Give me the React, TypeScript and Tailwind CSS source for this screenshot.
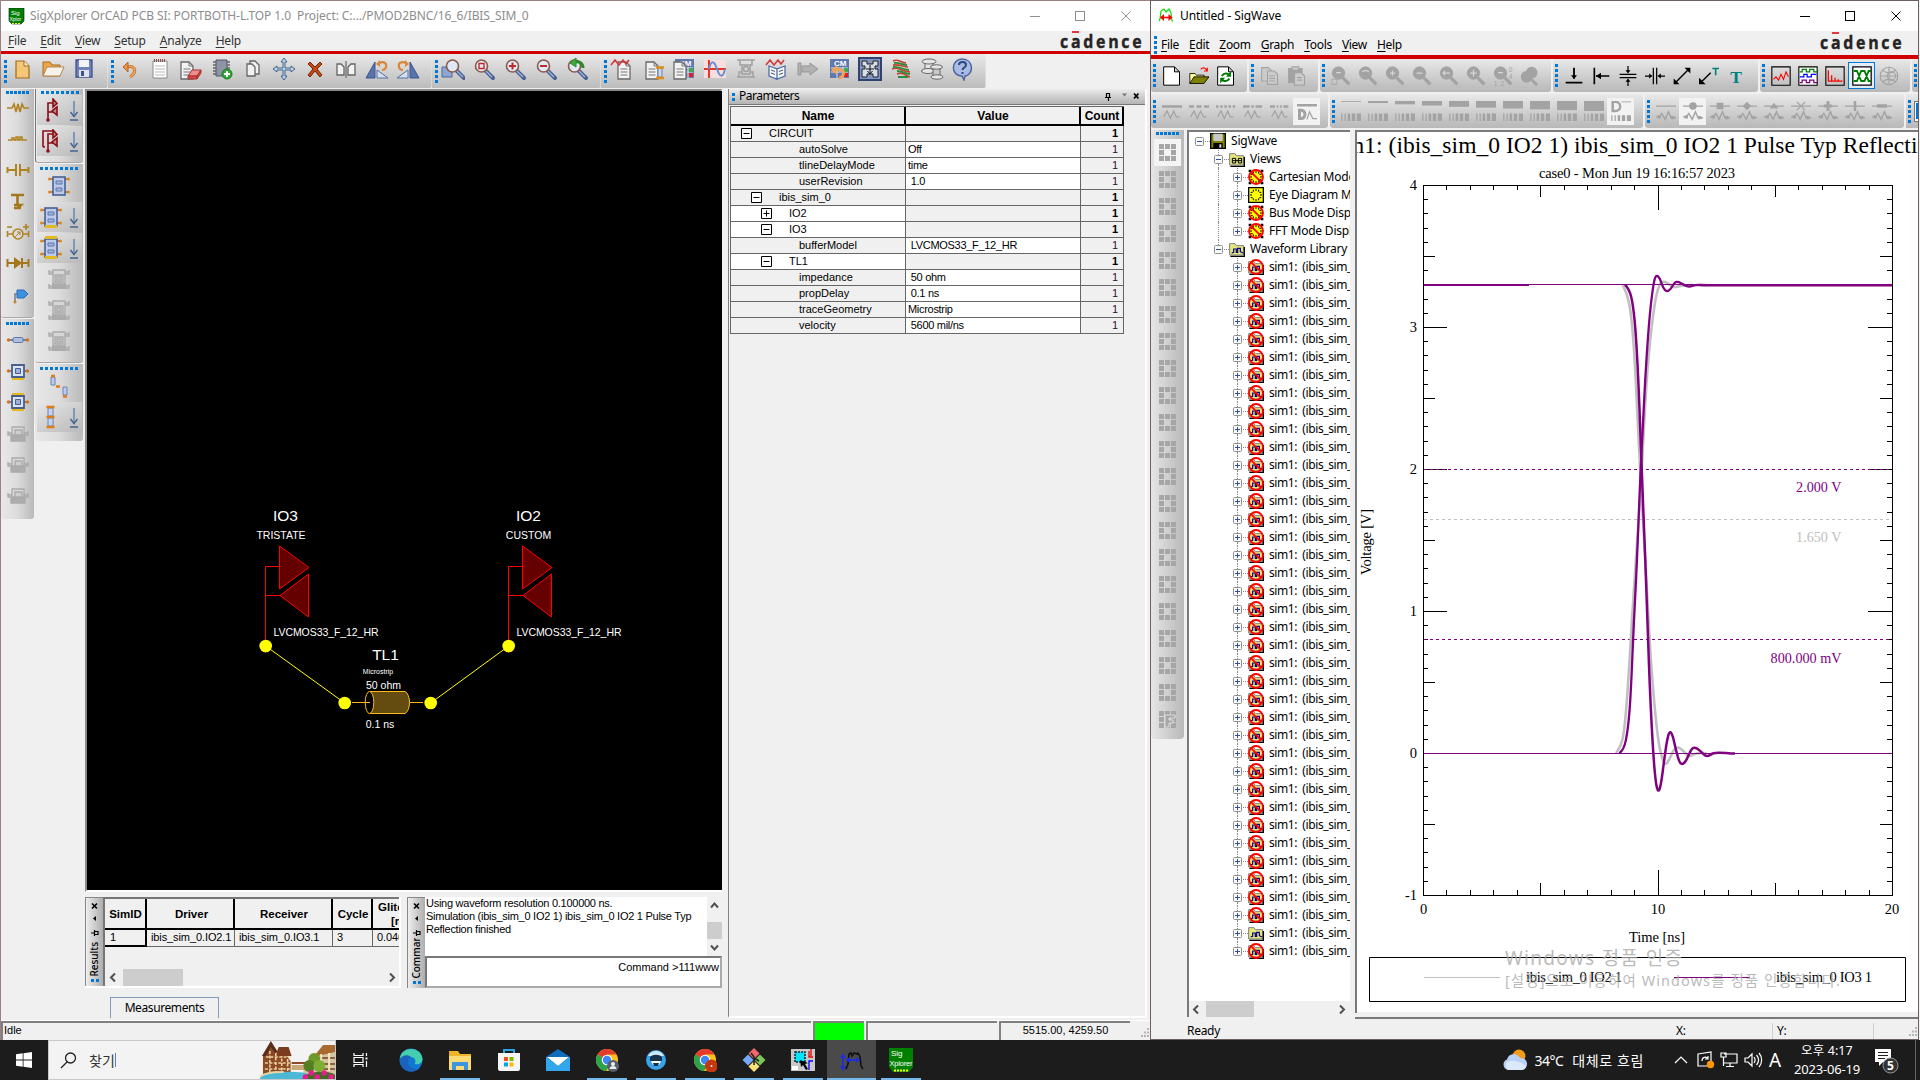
import React from "react";

type Kids = { children?: React.ReactNode };

/* ---------- small building blocks ---------- */

function Ic({ children, s = 24 }: Kids & { s?: number }) {
  return (
    <svg width={s} height={s} viewBox="0 0 24 24" fill="none" className="shrink-0">
      {children}
    </svg>
  );
}

function GripV() {
  return (
    <div className="flex w-[3px] shrink-0 flex-col gap-[2px]">
      {[0, 1, 2, 3, 4].map((i) => (
        <i key={i} className="h-[3px] w-[3px] bg-[#0078d7]" />
      ))}
    </div>
  );
}

function GripH({ n, wide }: { n: number; wide?: boolean }) {
  return (
    <div className={wide ? "flex justify-center gap-[2px]" : "flex justify-center gap-[1px]"}>
      {Array.from({ length: n }, (_, i) => (
        <i key={i} className="h-[3px] w-[3px] bg-[#0078d7]" />
      ))}
    </div>
  );
}

function Cadence() {
  return (
    <svg width="84" height="20" viewBox="0 0 84 20" className="overflow-visible">
      <g transform="scale(0.86 1)">
        <text x="0" y="16.500" textLength="95" lengthAdjust="spacing" fontFamily="Open Sans, sans-serif" fontWeight="700" fontSize="18.500" fill="#262324" stroke="#262324" strokeWidth=".4">
          cadence
        </text>
      </g>
      <rect x="12" y="0" width="7" height="2" fill="#e0383e" />
    </svg>
  );
}

function WinButtons({ color }: { color: string }) {
  return (
    <svg width="120" height="14" viewBox="0 0 120 14" fill="none" stroke={color} shapeRendering="crispEdges">
      <path d="M4 7.500h10M49.500 2.500h9v9h-9z" />
      <path d="M95.500 2.500l9 9M104.500 2.500l-9 9" shapeRendering="auto" />
    </svg>
  );
}

function Menu({ items, className }: { items: string[]; className: string }) {
  return (
    <div className={className}>
      {items.map((m) => (
        <span key={m}>
          <span className="underline underline-offset-2">{m[0]}</span>
          {m.slice(1)}
        </span>
      ))}
    </div>
  );
}

/* ---------- SigXplorer toolbar icons ---------- */

const Lens = ({ children }: Kids) => (
  <>
    <path d="M14 14l7 7" stroke="#4a5f96" strokeWidth="4" strokeLinecap="round" />
    <path d="M14 14l6 6" stroke="#9cb0d8" strokeWidth="1.500" />
    <circle cx="9.500" cy="9" r="6" fill="#dfe9f7" stroke="#8a5a48" strokeWidth="1.600" />
    {children}
  </>
);
const Page = ({ x = 5 }: { x?: number }) => (
  <g transform={`translate(${x} 3)`}>
    <path d="M1 2h8l4 4v13H1z" fill="#f2f2f2" stroke="#6a6a6a" strokeWidth="1.300" />
    <path d="M9 2v4h4M3.500 9h7M3.500 12h7M3.500 15h7" stroke="#777" />
  </g>
);
const CM = () => (
  <>
    <path d="M3 2h19v19H3z" fill="#5f78ae" />
    <text x="7" y="9" fontSize="8" fontWeight="700" fill="#fff" fontFamily="Liberation Sans, sans-serif">CM</text>
    <path d="M4 11h17M4 15h17M10 10v11M16 10v11" stroke="#dbe2f0" />
    <path d="M17 11h4v4h-4z" fill="#3fae49" />
    <path d="M17 16h4v4h-4z" fill="#e02020" />
  </>
);

const fileIcons = [
  <><path d="M6 4h8l5 5v12H6z" fill="#f3c777" stroke="#a36a1c" strokeWidth="1.200" /><path d="M14 4v5h5" fill="#fff1cf" stroke="#a36a1c" /></>,
  <><path d="M2 19V5h7l2 3h8v11z" fill="#eda64a" stroke="#a96a1f" /><path d="M2 19l4-9h17l-4 9z" fill="#f7f3ea" stroke="#b58750" /></>,
  <><path d="M4 3h16v17H4z" fill="#6f82bb" stroke="#3f5190" strokeWidth="1.300" /><path d="M7 3h10v7H7z" fill="#f2f4fa" /><path d="M7 13h10v7H7z" fill="#dfe3ee" /><path d="M9 14h3v5H9z" fill="#3f5190" /></>,
];
const editIcons = [
  <><path d="M10 10c6-2 9 2 7 6-1 2-2 3-4 4" stroke="#b5641f" strokeWidth="3" /><path d="M10 10c6-2 9 2 7 6-1 2-2 3-4 4" stroke="#f0a35a" strokeWidth="1.800" /><path d="M6 10l5-5v10z" fill="#e8944a" stroke="#b5641f" /></>,
  <><path d="M5 4h14v17H5z" fill="#fff" stroke="#8a8a8a" /><path d="M7 9h10M7 12h10M7 15h10M7 18h10" stroke="#b9b9b9" /><path d="M6 3.500h12" stroke="#8c5050" strokeWidth="3" strokeDasharray="1 1" /></>,
  <><Page x={1} /><path d="M9 19l4-6h9l-4 6z" fill="#ef8d8d" stroke="#a63434" /><path d="M9 19h9v3H9zM18 19l4-6v3l-4 6z" fill="#d64545" stroke="#a63434" /></>,
  <><path d="M6 3h11v16H6z" fill="#8c94a5" stroke="#4f5563" /><path d="M3 5h3M3 8h3M3 11h3M3 14h3M3 17h3M17 5h3M17 8h3M17 11h3" stroke="#666" strokeWidth="1.500" /><circle cx="17" cy="17" r="5" fill="#2fa836" stroke="#1b7a22" /><path d="M17 14v6M14 17h6" stroke="#fff" strokeWidth="2" /></>,
  <><path d="M9 4h5l4 4v9H9z" fill="#f1f1f1" stroke="#666" strokeWidth="1.300" /><path d="M6 7h5l3 3v9H6z" fill="#f1f1f1" stroke="#666" strokeWidth="1.300" /></>,
  <path d="M12 1l3 4h-2v6h6V9l4 3-4 3v-2h-6v6h2l-3 4-3-4h2v-6H5v2l-4-3 4-3v2h6V5H9z" fill="#bed3e6" stroke="#43668a" />,
  <path d="M7 5l5 5 5-5 2 2-5 5 5 6-2 2-5-6-5 6-2-2 5-6-5-5z" fill="#c24a18" stroke="#762506" />,
  <><path d="M3 7h4l3 3v8H3zM21 7h-4l-3 3v8h7z" fill="#f3f3f3" stroke="#666" strokeWidth="1.300" /><path d="M12 4v17" stroke="#555" /></>,
  <><path d="M10 5v16H1z" fill="#5874ac" stroke="#3e5688" /><path d="M12 21v-8l11 8z" fill="#d7dfef" stroke="#55709f" /><path d="M14 6c5-2 8 0 7 4-.5 2-2 3-4 3" stroke="#dd8639" strokeWidth="2.200" /><path d="M11 7l4-4v7z" fill="#dd8639" /></>,
  <><path d="M14 5v16h9z" fill="#5874ac" stroke="#3e5688" /><path d="M12 21v-8L1 21z" fill="#d7dfef" stroke="#55709f" /><path d="M10 6C5 4 2 6 3 10c.5 2 2 3 4 3" stroke="#dd8639" strokeWidth="2.200" /><path d="M13 7L9 3v7z" fill="#dd8639" /></>,
];
const zoomIcons = [
  <><path d="M1 10h10v10H1z" fill="#8ea4d2" stroke="#51689c" /><g transform="translate(2 0)"><Lens /></g></>,
  <Lens><path d="M7 6.500h5v5H7z" stroke="#c22a2a" strokeWidth="1.400" /></Lens>,
  <Lens><path d="M9.500 5.500v7M6 9h7" stroke="#c22a2a" strokeWidth="2" /></Lens>,
  <Lens><path d="M6 9h7" stroke="#c22a2a" strokeWidth="2" /></Lens>,
  <Lens><path d="M18 11c0-5-4-7-8-6" stroke="#2c8a2c" strokeWidth="3" /><path d="M11 1L5 6l6 4z" fill="#3fae3f" stroke="#2c8a2c" /></Lens>,
];
const wave = <path d="M1 8l4-5 4 5 4-5 3 4 3-4" stroke="#d13b3b" strokeWidth="1.600" />;
const toolIcons = [
  <><Page x={7} />{wave}</>,
  <><Page x={4} /><path d="M17 11h4v9h-4z" fill="#c8d6ef" stroke="#6c82b3" /><path d="M15 10.500h8M15 21h8" stroke="#dd8d18" strokeWidth="2.500" /></>,
  <><CM /><Page x={1} /></>,
  <><path d="M1 3h22v18H1z" fill="#f8dede" /><path d="M6 3v18M1 12h22" stroke="#e23a2a" strokeWidth="2" /><path d="M6 12c2-9 5-9 8 0s6 9 8 0" stroke="#6b8fd0" strokeWidth="2" /></>,
  <g stroke="#a0a0a0" strokeWidth="1.500"><path d="M3 3h18M3 20h18M6 3v5h2M18 3v5h-2M8 8h8v9H8zM5 20v-5h3M19 20v-5h-3" /><circle cx="12" cy="12" r="2.500" /></g>,
  <>{wave}<path d="M4 9l8 3v10l-8-3zM20 9l-8 3v10l8-3z" fill="#f4f7fd" stroke="#4f6da8" strokeWidth="1.300" /><path d="M6 13l4 1.500M6 16l4 1.500M18 13l-4 1.500M18 16l-4 1.500" stroke="#555" /></>,
  <path d="M2 6h3v12H2zM6 9h8V6l8 6-8 6v-3H6z" fill="#b1b1b1" stroke="#999" />,
  <><CM /><path d="M9 13c6-2 9 2 7 5-1 2-2 3-4 3" stroke="#f0a35a" strokeWidth="3" /><path d="M4 13l6-5v10z" fill="#f0a35a" /></>,
  <><path d="M1 1h22v22H1z" fill="#8396c1" stroke="#30426f" strokeWidth="2" /><path d="M4 4h5v3h6V4h5v5h-3v3h3v8h-5v-3H9v3H4v-8h3V9H4z" fill="#d6ddea" stroke="#222" /><path d="M8 12h8M12 8v8M9.500 14l2.500 3 2.500-3" stroke="#111" /></>,
  <><path d="M4 4c5-3 8 2 13 2M4 8c6-1 11 2 15 2M3 12c6-3 10 3 18 3M8 17c6-3 9 2 13 3" stroke="#c8402d" strokeWidth="1.600" /><path d="M5 6c5-1 8 2 13 2M4 10c6-1 11 3 16 3M8 14c6 0 8 3 13 3M9 20h10" stroke="#2d8d3a" strokeWidth="1.800" /></>,
  <g stroke="#666" fill="#e4e4e4"><path d="M5 5v8h8V5z" /><ellipse cx="9" cy="4.500" rx="7" ry="2.500" /><ellipse cx="8" cy="14" rx="6.500" ry="2.500" /><path d="M13 11v8h7v-8z" fill="#c9c9c9" /><ellipse cx="16.500" cy="10" rx="6" ry="2.200" /><ellipse cx="17" cy="20" rx="6" ry="2.200" /></g>,
  <><path d="M11 2c12 0 12 16 3 17l-1 4-2-4C-1 19 0 2 11 2z" fill="#a9bbe2" stroke="#4c669f" strokeWidth="1.500" /><path d="M8 8c0-4 7-4 7 0 0 2.500-3.500 2.500-3.500 5M11.500 15v2" stroke="#2c4882" strokeWidth="2" /></>,
];

function LeftToolbar() {
  const groups = [
    { w: "w-[107px]", icons: fileIcons },
    { w: "w-[324px]", icons: editIcons },
    { w: "w-[169px]", icons: zoomIcons },
    { w: "w-[385px]", icons: toolIcons },
  ];
  return (
    <div className="flex h-[34px] shrink-0">
      {groups.map((g, i) => (
        <div key={i} className={`${g.w} flex items-center rounded-r-[2px] border-r border-dotted border-[#e9e9e9] bg-gradient-to-b from-[#e9e9e9] to-[#bcbcbc] pl-[3px]`}>
          <GripV />
          <div className="ml-[3px] flex gap-[7px] pb-[4px]">
            {g.icons.map((ic, k) => (
              <Ic key={k}>{ic}</Ic>
            ))}
          </div>
        </div>
      ))}
    </div>
  );
}

/* ---------- side palettes ---------- */

const gold = "#b08322";
const partIcons = [
  <path d="M1 12h5l2-4 2 8 2-8 2 8 2-8 2 4h5" stroke={gold} strokeWidth="1.600" />,
  <path d="M2 13h4v-2h2v2h2v-3h2v3h2v-3h2v3h5" stroke={gold} strokeWidth="1.600" />,
  <path d="M1 12h9M14 12h9M10 6v12M14 6v12M1.500 9v6M22.500 9v6" stroke={gold} strokeWidth="2" />,
  <path d="M5 6h13M11.500 6v9M8 16h7l-3 3h3M8 19h4" stroke="#a5771c" strokeWidth="2.600" />,
  <><path d="M1 14h6M17 14h6M1.500 11v6M22.500 11v6M1 7h5M17 7h6M20 4v6" stroke={gold} strokeWidth="1.600" /><circle cx="12" cy="14" r="5" stroke={gold} strokeWidth="1.500" /><path d="M9 17l5-5M11 12h3v3" stroke={gold} /></>,
  <><path d="M1 12h22M1.500 8v8M22.500 8v8M16 7v10" stroke="#a5771c" strokeWidth="2" /><path d="M8 6l8 6-8 6z" fill="#a5771c" /></>,
  <><path d="M9 21v-9h4" stroke="#6c7d90" strokeWidth="1.500" /><path d="M11 8h7l4 4-4 4h-7z" fill="#3f8fe0" stroke="#2d6db4" /><circle cx="9" cy="20" r="1.500" fill="#c78628" /></>,
];
const Sq = ({ top, bot }: { top?: boolean; bot?: boolean }) => (
  <>
    <path d="M1 12h22" stroke="#52688f" strokeWidth="1.500" />
    <path d="M6 6h12v12H6z" fill="#dbe4f5" stroke="#4a5f8c" strokeWidth="1.800" />
    <path d="M9.500 9.500h5v5h-5z" fill="#9db0d8" stroke="#4a5f8c" />
    {top && <path d="M6 3h12v2H6z" fill="#e5b91e" />}
    {bot && <path d="M6 19h12v2H6z" fill="#e5b91e" />}
    <circle cx="2.500" cy="12" r="1.700" fill="#d9711a" /><circle cx="21.500" cy="12" r="1.700" fill="#d9711a" />
  </>
);
const SqGray = () => (
  <g stroke="#aaa" strokeWidth="1.300">
    <path d="M2 10v4h4M22 10v4h-4M2 12h4M18 12h4" />
    <path d="M6 6h12v8H6z" fill="#dadada" />
    <path d="M9 9h7v5H9z" fill="#cfcfcf" />
    <path d="M5 15h14v5H5z" fill="#adadad" />
  </g>
);
const lineIcons = [
  <><path d="M2 12h20" stroke="#52688f" strokeWidth="1.500" /><rect x="7" y="9.500" width="10" height="5" rx="1.500" fill="#aebfe2" stroke="#5e76a8" /><circle cx="2.500" cy="12" r="1.700" fill="#d9711a" /><circle cx="21.500" cy="12" r="1.700" fill="#d9711a" /></>,
  <Sq bot />,
  <Sq top bot />,
  <SqGray />,
  <SqGray />,
  <SqGray />,
];
const Chip = ({ top, bot }: { top?: boolean; bot?: boolean }) => (
  <>
    <path d="M2 5h20M2 18h20" stroke="#9a6a4a" strokeWidth="1.500" />
    <path d="M6 3h12v18H6z" fill="#bccaeb" stroke="#415a8c" strokeWidth="1.500" />
    <path d="M9 7h6v3H9zM9 14h6v3H9z" fill="#a3b5de" stroke="#5e76a8" />
    {[5, 18].map((y) => <g key={y} fill="#e0861c"><circle cx="2.500" cy={y} r="1.500" /><circle cx="21.500" cy={y} r="1.500" /></g>)}
    {top && <path d="M6 0h12v3H6z" fill="#e5b91e" />}
    {bot && <path d="M6 20h12v3H6z" fill="#e5b91e" />}
  </>
);
const ChipGray = () => (
  <g stroke="#aaa" strokeWidth="1.300">
    <path d="M2 3v4h4M22 3v4h-4M2 17v4h4M22 17v4h-4M2 5h4M18 5h4M2 19h4M18 19h4" />
    <path d="M6 3h12v18H6z" fill="#d6d6d6" />
    <path d="M8 8h8v7H8zM10 10h4v3h-4z" fill="#cdcdcd" />
    <path d="M6 17h12v4H6z" fill="#adadad" />
  </g>
);
const Buf = ({ dbl }: { dbl?: boolean }) => (
  <g stroke="#8c0d14" strokeWidth="1.600">
    <path d="M9 22V5h5M9 14h5" />
    <path d="M14 1v8l4-3.500zM18 9v8l-5-4z" fill="#b98b8b" />
    {dbl && <path d="M4 18V2h10M4 18h2" />}
    <circle cx="9" cy="22" r="1" fill="#8c0d14" />
  </g>
);
const Down = () => (
  <svg width="10" height="24" viewBox="0 0 10 24" fill="none" stroke="#44648f" className="shrink-0">
    <path d="M5 3v14" stroke="#7c98bb" strokeWidth="2" />
    <path d="M1.500 14L5 18.500 8.500 14M1 22h8" strokeWidth="1.400" />
  </svg>
);
const Drop = ({ children }: Kids) => (
  <div className="mb-px flex h-[30px] w-[45px] items-center gap-[6px] bg-gradient-to-br from-[#e8e8e8] to-[#b9b9b9] pl-[2px]">
    <Ic>{children}</Ic>
    <Down />
  </div>
);

function Palettes() {
  const bg = "bg-gradient-to-r from-[#e8e8e8] via-[#dcdcdc] to-[#b9b9b9] rounded-b-[3px]";
  return (
    <div className="flex w-[84px] shrink-0 gap-px">
      <div className="flex w-[33px] flex-col">
        <div className={`${bg} flex h-[229px] flex-col items-center border-b border-[#aaa] pt-[2px]`}>
          <GripH n={6} />
          <div className="mt-[2px] flex flex-col gap-[7px]">
            {partIcons.map((p, i) => <Ic key={i}>{p}</Ic>)}
          </div>
        </div>
        <div className={`${bg} mt-px flex h-[200px] flex-col items-center pt-[3px]`}>
          <GripH n={6} />
          <div className="mt-[3px] flex flex-col gap-[7px]">
            {lineIcons.map((p, i) => <Ic key={i}>{p}</Ic>)}
          </div>
        </div>
      </div>
      <div className="flex w-[48px] flex-col">
        <div className={`${bg} flex h-[74px] flex-col items-center border-b border-l border-[#aaa] border-l-[#777] pt-[2px]`}>
          <GripH n={8} wide />
          <div className="mt-[1px]">
            <Drop><Buf /></Drop>
            <Drop><Buf dbl /></Drop>
          </div>
        </div>
        <div className={`${bg} mt-px flex h-[199px] flex-col items-center border-b border-[#aaa] pt-[3px]`}>
          <GripH n={8} wide />
          <div className="mt-[4px] mb-[4px]"><Ic><Chip /></Ic></div>
          <Drop><Chip bot /></Drop>
          <Drop><Chip top bot /></Drop>
          <div className="mt-[3px] flex flex-col gap-[7px]">
            {[0, 1, 2].map((i) => <Ic key={i}><ChipGray /></Ic>)}
          </div>
        </div>
        <div className={`${bg} mt-px flex h-[77px] flex-col items-center pt-[3px]`}>
          <GripH n={8} wide />
          <div className="mt-[4px] mb-[4px]">
            <Ic><path d="M4 3h4v8H4zM16 13h4v8h-4z" fill="#bccaeb" stroke="#6d84b5" /><path d="M4 2h4M9 12.500h4M16 22.500h4" stroke="#dd7d18" strokeWidth="2.400" /></Ic>
          </div>
          <Drop><path d="M9 3h5v8H9zM9 13h5v8H9z" fill="#c5d2ee" stroke="#6d84b5" /><path d="M7.500 2h8M7.500 12h8M7.500 22h8" stroke="#dd7d18" strokeWidth="2.400" /></Drop>
        </div>
      </div>
    </div>
  );
}

/* ---------- circuit canvas ---------- */

function Buffer({ dx, name, kind, kindX }: { dx: number; name: string; kind: string; kindX: number }) {
  return (
    <g transform={`translate(${dx} 0)`}>
      <text x="285.500" y="521" textAnchor="middle" fontSize="15.500">{name}</text>
      <text x={kindX} y="539" textAnchor="middle" fontSize="10.500">{kind}</text>
      <path d="M265.500 653v-86.500h14M265.500 595.500h15" fill="none" stroke="#f00" />
      <path d="M279.500 546v43l29.500-21.500zM308.500 574v43L280 595.500z" fill="#640000" stroke="#f00" />
      <text x="273.500" y="635.500" fontSize="10.500" textLength="105">LVCMOS33_F_12_HR</text>
      <circle cx="265.700" cy="646" r="6.300" fill="#ff0" stroke="none" />
    </g>
  );
}

function Circuit() {
  return (
    <svg width="635" height="799" viewBox="87 91 635 799" className="block bg-black" fontFamily="Liberation Sans, Arial, sans-serif" fill="#fff">
      <path d="M265.700 646L344.700 703M430.700 703L508.700 646" stroke="#ff0" fill="none" />
      <Buffer dx={0} name="IO3" kind="TRISTATE" kindX={281} />
      <Buffer dx={243} name="IO2" kind="CUSTOM" kindX={285.5} />
      <text x="385.500" y="660" textAnchor="middle" fontSize="15.500">TL1</text>
      <text x="378" y="674" textAnchor="middle" fontSize="7">Microstrip</text>
      <text x="383.500" y="689" textAnchor="middle" fontSize="10.500">50 ohm</text>
      <text x="380" y="728" textAnchor="middle" fontSize="10.500">0.1 ns</text>
      <path d="M370 691.500h35c6 3 6 19 0 22h-35z" fill="#644b10" stroke="#ffb91e" />
      <ellipse cx="369.500" cy="702.500" rx="4.300" ry="11" fill="#000" stroke="#ffb91e" />
      <path d="M352 702.500h18M410 702.500h13" stroke="#ffb91e" />
      <circle cx="344.700" cy="703" r="6.300" fill="#ff0" />
      <circle cx="430.700" cy="703" r="6.300" fill="#ff0" />
    </svg>
  );
}

/* ---------- parameters panel ---------- */

type Param = { d: 0 | 1 | 2 | 3; n: string; v?: string; box?: "+" | "-"; w?: boolean };
const params: Param[] = [
  { d: 0, n: "CIRCUIT", box: "-" },
  { d: 3, n: "autoSolve", v: "Off" },
  { d: 3, n: "tlineDelayMode", v: "time" },
  { d: 3, n: "userRevision", v: " 1.0" },
  { d: 1, n: "ibis_sim_0", box: "-" },
  { d: 2, n: "IO2", box: "+", w: true },
  { d: 2, n: "IO3", box: "-", w: true },
  { d: 3, n: "bufferModel", v: " LVCMOS33_F_12_HR" },
  { d: 2, n: "TL1", box: "-", w: true },
  { d: 3, n: "impedance", v: " 50 ohm" },
  { d: 3, n: "propDelay", v: " 0.1 ns" },
  { d: 3, n: "traceGeometry", v: "Microstrip" },
  { d: 3, n: "velocity", v: " 5600 mil/ns" },
];
const indent = ["pl-[10px]", "pl-[20px]", "pl-[30px]", "pl-[68px]"];

function Parameters() {
  const th = "flex h-[19px] items-center justify-center border-r-2 border-b-2 border-black pl-px font-bold text-[12px] leading-[14px]";
  return (
    <div className="flex h-[929px] w-[419px] flex-col border-r-2 border-b-2 border-l border-white border-l-[#808080]">
      <div className="flex h-[16px] shrink-0 items-center border-b border-[#777] bg-gradient-to-b from-[#ececec] to-[#b4b4b4] pl-[3px] font-['Noto_Sans'] text-[12px] leading-[14px]">
        <span className="flex flex-col gap-[2px]"><i className="h-[3px] w-[3px] bg-[#0078d7]" /><i className="h-[3px] w-[3px] bg-[#0078d7]" /></span>
        <span className="mt-[-2px] ml-[4px] tracking-[-0.5px]">Parameters</span>
        <svg className="mr-[6px] ml-auto" width="36" height="11" viewBox="0 0 36 11" fill="none" stroke="#000">
          <path d="M2 6.500h6M3.500 6V2.500h3V6M5.500 6v4" strokeWidth="1.200" />
          <path d="M19 2.500h5l-2.500 3z" fill="#777" stroke="none" />
          <path d="M31 2.500l4.500 5M35.500 2.500L31 7.500" strokeWidth="1.800" />
        </svg>
      </div>
      <div className="mt-px ml-px flex w-[394px] flex-col border-t border-l border-[#666] text-[11px]">
        <div className="grid h-[19px] grid-cols-[175px_175px_43px]">
          <div className={th}>Name</div>
          <div className={th}>Value</div>
          <div className={th}>Count</div>
        </div>
        {params.map((p, i) => (
          <div key={i} className="grid h-[16px] grid-cols-[175px_175px_43px] leading-[15px]">
            <div className={`${indent[p.d]} ${p.w ? "bg-white" : ""} flex items-center border-r border-b border-[#666]`}>
              {p.box && (
                <svg width="11" height="11" viewBox="0 0 11 11" className="mr-[17px]" stroke="#000" fill="#fff">
                  <path d="M.5.5h10v10H.5zM2.500 5.500h6" />
                  {p.box === "+" && <path d="M5.500 2.500v6" />}
                </svg>
              )}
              {p.n}
            </div>
            <div className={`${p.v ? "bg-white" : ""} border-r border-b border-[#666] pl-[2px] tracking-[-0.3px] whitespace-pre`}>{p.v}</div>
            <div className={`${p.v ? "text-[#301030]" : "font-bold"} border-r border-b border-[#666] pr-[5px] text-right`}>1</div>
          </div>
        ))}
      </div>
    </div>
  );
}

/* ---------- lower panels ---------- */

function Strip({ label }: { label: string }) {
  return (
    <div className="flex w-[18px] shrink-0 flex-col items-center overflow-hidden border-t border-l border-[#888] bg-gradient-to-r from-[#eee] to-[#aeaeae] pt-[4px] pb-[4px]">
      <svg width="11" height="36" viewBox="0 0 11 36" fill="none" stroke="#000" className="shrink-0">
        <path d="M3 1.500l5 5M8 1.500l-5 5" strokeWidth="1.600" />
        <path d="M7 14v5l-3-2.500z" fill="#000" stroke="none" />
        <path d="M5.500 28v6M5.500 29.500h3.500v3h-3.500M2 31h3" strokeWidth="1.200" />
      </svg>
      <div className="flex min-h-0 flex-1 items-end overflow-hidden font-['Noto_Sans'] text-[10px] leading-[13px] font-medium">
        <span className="rotate-180 whitespace-nowrap [writing-mode:vertical-rl]">{label}</span>
      </div>
      <span className="mt-[2px] flex gap-[2px]"><i className="h-[3px] w-[3px] bg-[#0078d7]" /><i className="h-[3px] w-[3px] bg-[#0078d7]" /></span>
    </div>
  );
}

const Chevron = ({ d }: { d: string }) => (
  <svg width="11" height="11" viewBox="0 0 11 11" fill="none" stroke="#505050" strokeWidth="2"><path d={d} /></svg>
);

function Lower() {
  const th = "flex items-center justify-center border-r-2 border-b-2 border-black font-bold";
  const td = "border-r border-b border-[#666] pl-[4px] whitespace-nowrap";
  return (
    <div className="mt-[5px] flex h-[91px] shrink-0">
      <div className="flex w-[316px] border-r-2 border-b-2 border-white">
        <Strip label="Results" />
        <div className="flex min-w-0 flex-1 flex-col overflow-hidden border-t-2 border-l-2 border-[#777] text-[11px]">
          <div className="grid h-[31px] shrink-0 grid-cols-[42px_88px_98px_40px_60px] text-[11.500px] leading-[14px]">
            <div className={`${th} pl-px`}>SimID</div>
            <div className={`${th} pl-[3px]`}>Driver</div>
            <div className={`${th} pl-[2px]`}>Receiver</div>
            <div className={`${th} pl-[2px]`}>Cycle</div>
            <div className="border-b-2 border-black pt-px pl-[5px] font-bold">Glitch<br /><span className="pl-[13px]">[mV]</span></div>
          </div>
          <div className="grid h-[16px] shrink-0 grid-cols-[42px_88px_98px_40px_60px] leading-[15px] tracking-[-0.1px]">
            <div className="border-r-2 border-b-2 border-black pl-[5px] leading-[15px]">1</div>
            <div className={td}>ibis_sim_0.IO2.1</div>
            <div className={td}>ibis_sim_0.IO3.1</div>
            <div className={td}>3</div>
            <div className={td}>0.0461</div>
          </div>
          <div className="mt-auto flex h-[17px] items-center bg-[#f0f0f0] pr-[2px] pl-[3px]">
            <Chevron d="M7 1.500L3 5.500l4 4" />
            <div className="ml-[4px] h-full w-[60px] bg-[#cdcdcd]" />
            <span className="ml-auto"><Chevron d="M4 1.500l4 4-4 4" /></span>
          </div>
        </div>
      </div>
      <div className="ml-[6px] flex w-[315px]">
        <Strip label="Command" />
        <div className="flex min-w-0 flex-1 flex-col">
          <div className="flex h-[59px] bg-white">
            <div className="min-w-0 flex-1 pl-px text-[11px] leading-[13px] tracking-[-0.26px] whitespace-nowrap">
              Using waveform resolution 0.100000 ns.<br />
              Simulation (ibis_sim_0 IO2 1) ibis_sim_0 IO2 1 Pulse Typ<br />
              Reflection finished
            </div>
            <div className="flex w-[15px] shrink-0 flex-col items-center bg-[#f0f0f0] py-[3px]">
              <Chevron d="M2 7.500l3.500-4 3.500 4" />
              <div className="mt-[11px] h-[17px] w-full bg-[#cdcdcd]" />
              <span className="mt-auto"><Chevron d="M2 3.500l3.500 4 3.500-4" /></span>
            </div>
          </div>
          <div className="flex-1 border-2 border-[#777] border-r-[#aaa] border-b-[#aaa] bg-white pt-[2px] pr-px text-right text-[11px] leading-[14px]">
            Command &gt;111www
          </div>
        </div>
      </div>
    </div>
  );
}

function SigXplorer() {
  const cell = "border-t-2 border-l-2 border-[#808080]";
  return (
    <div className="flex h-[1040px] w-[1150px] shrink-0 flex-col border-t border-l border-[#9a8080] bg-[#f0f0f0]">
      <div className="flex h-[30px] shrink-0 items-center bg-white pl-[7px] font-['Noto_Sans'] text-[12px] text-[#8d8d8d]">
        <svg width="17" height="17" viewBox="0 0 17 17">
          <path d="M1 0h15v13l-3 3H4l-3-3z" fill="#008000" stroke="#111" strokeWidth=".6" />
          <path d="M4 15.500h9" stroke="#ff0" strokeDasharray="2 1" />
          <text x="3" y="7" fontSize="6" fill="#fff" fontFamily="Liberation Sans, sans-serif">Sig</text>
          <text x="1.500" y="12.500" fontSize="5" fill="#fff" fontFamily="Liberation Sans, sans-serif">Xplor</text>
        </svg>
        <span className="ml-[5px] tracking-[-0.08px] whitespace-pre">SigXplorer OrCAD PCB SI: PORTBOTH-L.TOP 1.0  Project: C:.../PMOD2BNC/16_6/IBIS_SIM_0</span>
        <span className="mr-[4px] ml-auto"><WinButtons color="#909090" /></span>
      </div>
      <div className="flex h-[20px] shrink-0 items-center justify-between pr-[6px]">
        <Menu items={["File", "Edit", "View", "Setup", "Analyze", "Help"]} className="flex gap-[14px] pl-[7px] font-['Noto_Sans'] text-[12px] tracking-[-0.22px] text-[#333]" />
        <Cadence />
      </div>
      <div className="h-[3px] shrink-0 bg-[#d00000]" />
      <LeftToolbar />
      <div className="mt-px flex h-[929px] shrink-0">
        <Palettes />
        <div className="flex w-[637px] shrink-0 flex-col">
          <div className="h-[803px] shrink-0 border-t-2 border-r border-b-2 border-l-2 border-[#8a8a8a] border-r-white border-b-white"><Circuit /></div>
          <Lower />
          <div className="mt-[9px] ml-[25px] flex h-[21px] w-[109px] items-center justify-center border border-b-0 border-[#7f9db9] font-['Noto_Sans'] text-[12px] tracking-[-0.4px]">Measurements</div>
        </div>
        <div className="ml-[6px]"><Parameters /></div>
      </div>
      <div className="mt-[2px] flex flex-1 gap-[2px] border-t border-white text-[11px] leading-[15px]">
        <div className={`${cell} w-[810px] pl-px`}>Idle</div>
        <div className={`${cell} w-[51px] bg-[#00ff00]`} />
        <div className={`${cell} w-[131px]`} />
        <div className={`${cell} w-[131px] text-center`}>5515.00, 4259.50</div>
        <Corner />
      </div>
    </div>
  );
}

const Corner = () => (
  <svg width="10" height="10" viewBox="0 0 10 10" className="mt-auto mb-[2px] ml-auto" fill="#b5b5b5">
    <path d="M7 0h2v2H7zM4 3.500h2v2H4zM7 3.500h2v2H7zM1 7h2v2H1zM4 7h2v2H4zM7 7h2v2H7z" />
  </svg>
);

/* ---------- SigWave toolbars ---------- */

type Tool = { el: React.ReactNode; on?: "white" | "blue" };

function Bar({ w, tools }: { w: string; tools: Tool[] }) {
  return (
    <div className={`${w} flex shrink-0 items-center overflow-hidden rounded-[3px] bg-gradient-to-b from-[#e9e9e9] to-[#b8b8b8] pl-[2px]`}>
      <GripV />
      <div className="ml-[2px] flex">
        {tools.map((t, i) => (
          <div
            key={i}
            className={
              t.on === "blue"
                ? "flex h-[27px] w-[27px] items-center justify-center border border-[#0078d7] bg-[#e3edf7]"
                : t.on === "white"
                  ? "flex h-[27px] w-[27px] items-center justify-center bg-[#f2f2f2]"
                  : "flex h-[27px] w-[27px] items-center justify-center"
            }
          >
            <Ic s={20}>{t.el}</Ic>
          </div>
        ))}
      </div>
    </div>
  );
}

const G = "#a3a3a3";
const glass = (sym: string, extra?: React.ReactNode) => (
  <g stroke={G}>
    <circle cx="9" cy="8.500" r="7.500" fill={G} />
    <path d="M14 14l8 8" strokeWidth="4" />
    <path d={sym} stroke="#d6d6d6" strokeWidth="1.500" />
    {extra}
  </g>
);
const row1: { w: string; tools: Tool[] }[] = [
  {
    w: "w-[96px]",
    tools: [
      { el: <path d="M2 1h13l6 6v16H2zM15 1v6h6" fill="#fff" stroke="#000" strokeWidth="1.200" /> },
      { el: <><path d="M1 21V9h6l2 2h9v3" fill="#ffff9c" stroke="#000" /><path d="M1 21l5-8h18l-6 8z" fill="#808000" stroke="#000" /><path d="M14 4c3-3 6-2 8 2M22 2v4h-4" stroke="#f00" strokeWidth="1.300" /></> },
      { el: <><path d="M2 1h13l6 6v16H2zM15 1v6h6" fill="#fff" stroke="#000" strokeWidth="1.200" /><path d="M7 12c2-4 7-4 9-1M16 15c-2 4-7 4-9 1" stroke="#007a00" strokeWidth="2.400" /><path d="M18 6v7h-6zM5 21v-7h6z" fill="#007a00" /></> },
    ],
  },
  {
    w: "w-[69px]",
    tools: [
      { el: <g stroke={G} fill="#ccc" strokeWidth="1.400"><path d="M2 2h8l4 4v12H2z" /><path d="M9 6h8l4 4v12H9zM11 12h7M11 15h7M11 18h7" /></g> },
      { el: <g stroke={G} strokeWidth="1.400"><path d="M2 3h16v17H2z" fill={G} /><path d="M6 1h8v4H6z" fill="#ccc" /><path d="M9 8h8l4 4v11H9zM12 14h6M12 17h6" fill="#ccc" /></g> },
    ],
  },
  {
    w: "w-[231px]",
    tools: [
      { el: glass("M6 8h6", <path d="M1 16h6v6H1z" />) },
      { el: glass("M5 7c2-2 6-2 8 0") },
      { el: glass("M6 8.500h6M9 5.500v6") },
      { el: glass("M5.500 8.500h7") },
      { el: glass("M5 8.500h8M7 6L5 8.500 7 11") },
      { el: glass("M5 8.500h8M9 4.500v8") },
      {
        el: glass("M6 8h6", (
          <g fill={G} stroke="none" fontSize="8" fontFamily="Liberation Sans, sans-serif">
            <text x="19" y="7">0</text><text x="19" y="16">4</text><text x="1" y="24">1</text><text x="9" y="24">2</text>
          </g>
        )),
      },
      { el: <g fill={G}><circle cx="8" cy="13" r="7" /><circle cx="14" cy="8" r="7" /><path d="M14 14l8 8-3 2-8-8z" /></g> },
    ],
  },
  {
    w: "w-[205px]",
    tools: [
      { el: <g stroke="#000" strokeWidth="1.600"><path d="M12 2v13M2 20h20" strokeWidth="2.200" /><path d="M8.500 11h7L12 16z" fill="#000" stroke="none" /></g> },
      { el: <g stroke="#000" strokeWidth="1.600"><path d="M4 2v20M6 12h16" strokeWidth="2" /><path d="M12 8v8l-6-4z" fill="#000" stroke="none" /></g> },
      { el: <g stroke="#000" strokeWidth="1.500"><path d="M2 10h20M2 14h20M12 0v6M12 18v6" /><path d="M9 5h6l-3 4zM9 19h6l-3-4z" fill="#000" stroke="none" /></g> },
      { el: <g stroke="#000" strokeWidth="1.500"><path d="M10 2v20M14 2v20M0 12h6M18 12h6" /><path d="M5 9v6l4-3zM19 9v6l-4-3z" fill="#000" stroke="none" /></g> },
      { el: <><path d="M4 20L20 4" stroke="#000" strokeWidth="1.700" /><path d="M22 2v7l-7-7zM2 22v-7l7 7z" fill="#000" /></> },
      { el: <><path d="M3 19L14 8" stroke="#000" strokeWidth="1.700" /><path d="M0 22v-8l8 8z" fill="#000" /><path d="M16 3h8M20 3v8" stroke="#008080" strokeWidth="2" /></> },
      { el: <text x="5" y="20" fontSize="21" fontWeight="700" fill="#008080" fontFamily="Liberation Serif, serif">T</text> },
    ],
  },
  {
    w: "w-[150px]",
    tools: [
      { el: <><path d="M1 1h22v22H1z" stroke="#000" strokeWidth="1.300" /><path d="M3 16l3-3 3 4 3-7 3 6 3-9 3 6" stroke="#f00" strokeWidth="1.300" /></> },
      { el: <><path d="M1 1h22v22H1z" fill="#fff" stroke="#000" strokeWidth="1.300" /><path d="M2 7h3V4h5v3h4V4h5v3h4" stroke="#008000" strokeWidth="1.500" /><path d="M2 13h5v-3h4v3h5v-3h6" stroke="#00f" strokeWidth="1.500" /><path d="M2 20h3v-3h5v3h4v-3h5v3h4" stroke="#800080" strokeWidth="1.500" /></> },
      { el: <><path d="M1 1h22v22H1z" stroke="#000" strokeWidth="1.300" /><path d="M4 5v13h17M8 11v7M12 14v4M16 16v2" stroke="#f00" strokeWidth="1.500" /></> },
      { el: <><path d="M1 1h22v22H1z" fill="#fff" stroke="#000" strokeWidth="1.500" /><path d="M2 6h4l5 12h4l5-12h3M2 18h4L11 6h4l5 12h3" stroke="#008000" strokeWidth="2.200" /></>, on: "blue" },
      { el: <g stroke={G} strokeWidth="1.300"><circle cx="12" cy="12" r="10.500" /><circle cx="15" cy="12" r="5" /><path d="M1 12h22M12 1v22M4 5c5 4 11 4 16 0M4 19c5-4 11-4 16 0" /></g> },
    ],
  },
  { w: "w-[12px]", tools: [] },
];

const squiggle = <path d="M2 19l4-7 4 9 4-9 3 7h4" stroke={G} strokeWidth="1.500" />;
const line = (dash?: string) => (
  <><path d="M0 6.500h24" stroke={G} strokeWidth="3" strokeDasharray={dash} />{squiggle}</>
);
const thick = (h: number) => (
  <><rect x="0" y="0" width="24" height={h} fill={G} /><path d="M1 15v9M5 15v9" stroke={G} strokeWidth="1.500" /><path d="M8 15h3v9H8zM13 15h4v9h-4zM19 15h5v9h-5z" fill={G} /></>
);
const mark = (el: React.ReactNode) => (
  <><path d="M0 6h24" stroke={G} strokeWidth="1.500" />{el}<path d="M0 19h4l3-4 4 7 4-9 3 7h6" stroke={G} strokeWidth="1.700" /><path d="M2 17h4v4H2zM18 18h4v4h-4z" fill={G} /></>
);
const row2: { w: string; tools: Tool[] }[] = [
  {
    w: "w-[177px]",
    tools: [
      { el: line() }, { el: line("6 3") }, { el: line("3 2") }, { el: line("8 2 3 2") }, { el: line("6 2 2 2 2 2") },
      { el: <><path d="M0 5h24" stroke={G} strokeWidth="3" /><path d="M3 11h2c6 0 6 10 0 10H3z" stroke={G} strokeWidth="3.600" /><path d="M12 22l3-9 4 8h5" stroke={G} strokeWidth="1.500" /></>, on: "white" },
    ],
  },
  {
    w: "w-[313px]",
    tools: [
      ...[1, 2.5, 4, 5.5, 7, 8, 9, 10, 11, 12].map((h) => ({ el: thick(h) })),
      { el: <><path d="M2 1h3c8 0 8 11 0 11H2z" stroke={G} strokeWidth="3" /><path d="M12 1h12" stroke={G} /><path d="M1 17v7M5 17v7" stroke={G} strokeWidth="1.500" /><path d="M8 17h3v7H8zM13 17h4v7h-4zM19 17h5v7h-5z" fill={G} /></>, on: "white" },
    ],
  },
  {
    w: "w-[259px]",
    tools: [
      { el: mark(null) },
      { el: mark(<circle cx="12" cy="6" r="4.500" fill={G} />), on: "white" },
      { el: mark(<path d="M8 2h8v8H8z" fill={G} />) },
      { el: mark(<path d="M12 1l5 5-5 5-5-5z" fill={G} />) },
      { el: mark(<path d="M12 2l5 7H7z" fill={G} />) },
      { el: mark(<path d="M7 1l10 10M17 1L7 11" stroke={G} strokeWidth="1.500" />) },
      { el: mark(<path d="M12 0v12M7 6h10" stroke={G} strokeWidth="3.500" />) },
      { el: mark(<path d="M12 0v12" stroke={G} strokeWidth="3" />) },
      { el: mark(<path d="M6 6h12" stroke={G} strokeWidth="4" />) },
    ],
  },
];

/* ---------- SigWave tree ---------- */

function Expander({ sign, up, down }: { sign: string; up: boolean; down: boolean }) {
  return (
    <div className="flex h-[18px] w-[19px] shrink-0 flex-col items-center">
      <i className={up ? "w-0 flex-1 border-l border-dotted border-[#888]" : "w-0 flex-1"} />
      <svg width="9" height="9" viewBox="0 0 9 9" fill="#fafafa" stroke="#8f8f8f">
        <rect x=".5" y=".5" width="8" height="8" rx="1" />
        <path d={sign === "+" ? "M2 4.500h5M4.500 2v5" : "M2 4.500h5"} stroke="#2f4f9f" />
      </svg>
      <i className={down ? "w-0 flex-1 border-l border-dotted border-[#888]" : "w-0 flex-1"} />
    </div>
  );
}

const folder = (
  <>
    <path d="M1 21V4h8l2 3h11v14z" fill="#e6e67a" stroke="#7d7d7d" strokeWidth="1.500" />
    <path d="M2 23h21V9" stroke="#000" strokeWidth="2" />
  </>
);
const waveFolder = <>{folder}<path d="M4 18l3-1V12h4v5h2v-6h4v5l4 2" stroke="#000080" strokeWidth="1.800" /></>;
const ban = <><circle cx="12" cy="12" r="10.500" stroke="#f00" strokeWidth="2.800" /><path d="M5 5l14 14" stroke="#f00" strokeWidth="2.800" /></>;
const dial = (
  <path d="M8 4v3M12 3v3M16 4v3M8 17v3M12 18v3M16 17v3M4 8h3M3 12h3M4 16h3M17 8h3M18 12h3M17 16h3" stroke="#000" strokeWidth="1.500" />
);
const treeIcon: Record<string, React.ReactNode> = {
  disk: <><path d="M1 1h22v22H1z" fill="#808000" stroke="#000" strokeWidth="2" /><path d="M5 1h14v11H5z" fill="#c8c8c8" /><path d="M5 15h14v8H5z" fill="#000" /><path d="M14 17h3v5h-3z" fill="#ddd" /></>,
  views: <>{folder}<path d="M5 11h5v7H5zM14 11h5v7h-5zM5 14.500h14" stroke="#000" strokeWidth="1.500" /></>,
  lib: waveFolder,
  mode: <><path d="M1 1h22v22H1z" fill="#ff0" stroke="#000" strokeWidth="2" />{dial}</>,
  modeOff: <><path d="M1 1h4v4H1zM19 1h4v4h-4zM1 19h4v4H1zM19 19h4v4h-4z" fill="#000" /><circle cx="12" cy="12" r="10.500" fill="#ff0" />{dial}{ban}</>,
  simOff: <>{waveFolder}{ban}</>,
};

type Node = { d: number; t: string; i: string; s?: string; up?: boolean; down?: boolean; rail?: boolean };
const nodes: Node[] = [
  { d: 0, t: "SigWave", i: "disk", s: "-" },
  { d: 1, t: "Views", i: "views", s: "-", up: true, down: true },
  { d: 2, t: "Cartesian Mode", i: "modeOff", up: true, down: true, rail: true },
  { d: 2, t: "Eye Diagram Mode", i: "mode", up: true, down: true, rail: true },
  { d: 2, t: "Bus Mode Display", i: "modeOff", up: true, down: true, rail: true },
  { d: 2, t: "FFT Mode Display", i: "modeOff", up: true, rail: true },
  { d: 1, t: "Waveform Library", i: "lib", s: "-", up: true },
  ...Array.from({ length: 39 }, (_, k) => ({ d: 2, t: "sim1: (ibis_sim_0", i: k === 37 ? "lib" : "simOff", up: true, down: k < 38 })),
];

function Tree() {
  return (
    <div className="flex h-[887px] w-[163px] shrink-0 flex-col overflow-hidden border-t-2 border-l-2 border-[#7a7a7a] bg-white font-['Noto_Sans'] text-[12px]">
      <div className="flex flex-col overflow-hidden">
        {nodes.map((n, k) => (
          <div key={k} className="flex h-[18px] shrink-0 items-center pl-px whitespace-nowrap">
            {n.d > 0 && <i className="w-[19px] shrink-0" />}
            {n.d > 1 && (
              <span className="flex h-full w-[19px] shrink-0 justify-center">
                {n.rail && <i className="border-l border-dotted border-[#888]" />}
              </span>
            )}
            <Expander sign={n.s ?? "+"} up={!!n.up} down={!!n.down} />
            <i className="-ml-[4px] w-[5px] shrink-0 border-t border-dotted border-[#888]" />
            <Ic s={16}>{treeIcon[n.i]}</Ic>
            <span className={k > 6 ? "ml-[5px] tracking-[-0.4px] [word-spacing:2.500px]" : "ml-[5px] tracking-[-0.2px]"}>{n.t}</span>
          </div>
        ))}
      </div>
      <div className="mt-auto flex h-[16px] items-center bg-[#f0f0f0] pr-[3px] pl-[2px]">
        <Chevron d="M7 1.500L3 5.500l4 4" />
        <div className="ml-[4px] h-full w-[48px] bg-[#cdcdcd]" />
        <span className="ml-auto"><Chevron d="M4 1.500l4 4-4 4" /></span>
      </div>
    </div>
  );
}

/* ---------- waveform plot ---------- */

type P = [number, number];
function curve(pts: P[]) {
  const q = pts.map(([x, y]): P => [1540 + x / 3, 240 + y / 2.8]);
  let d = `M${q[0][0]} ${q[0][1]}`;
  for (let i = 1; i < q.length - 1; i++) {
    const mx = (q[i][0] + q[i + 1][0]) / 2;
    const my = (q[i][1] + q[i + 1][1]) / 2;
    d += `Q${q[i][0]} ${q[i][1]} ${mx} ${my}`;
  }
  const e = q[q.length - 1];
  return `${d}L${e[0]} ${e[1]}`;
}
const purpleFall = curve([[255, 125], [268, 138], [279, 180], [288, 265], [297, 430], [304, 620], [312, 800], [320, 1000], [329, 1250], [339, 1430], [347, 1520], [355, 1548], [363, 1525], [372, 1460], [381, 1400], [389, 1374], [398, 1386], [407, 1425], [418, 1463], [428, 1469], [440, 1456], [452, 1428], [463, 1419], [481, 1430], [500, 1449], [520, 1435], [560, 1437], [585, 1438]]);
const purpleRise = curve([[238, 1437], [252, 1428], [264, 1370], [272, 1280], [281, 1080], [290, 920], [300, 680], [309, 510], [318, 350], [328, 220], [337, 145], [344, 106], [351, 98], [360, 108], [370, 136], [381, 145], [393, 137], [404, 118], [416, 117], [430, 125], [448, 132], [465, 125], [500, 127], [1056, 127]]);
const grayFall = curve([[248, 125], [262, 150], [274, 210], [284, 330], [294, 520], [302, 680], [314, 860], [324, 1040], [334, 1200], [346, 1330], [356, 1410], [366, 1452], [376, 1470], [387, 1458], [400, 1428], [414, 1419], [430, 1430], [447, 1448], [460, 1440], [480, 1435], [500, 1438]]);
const grayRise = curve([[228, 1437], [242, 1420], [252, 1380], [260, 1300], [268, 1190], [276, 1060], [286, 920], [298, 760], [307, 620], [314, 480], [324, 340], [335, 240], [347, 160], [359, 122], [372, 115], [388, 124], [404, 134], [425, 126], [500, 127]]);

function Ticks() {
  let d = "";
  for (let i = 1; i < 20; i++) {
    const x = Math.round(1423 + i * 23.45) + 0.5;
    const l = i % 10 === 0 ? 25 : i % 5 === 0 ? 12 : 5;
    d += `M${x} 185v${l}M${x} 895v-${l}`;
  }
  for (let i = 1; i < 50; i++) {
    const y = Math.round(185 + i * 14.2) + 0.5;
    const l = i % 10 === 0 ? 24 : i % 5 === 0 ? 12 : 5;
    d += `M1423 ${y}h${l}M1892 ${y}h-${l}`;
  }
  return <path d={d} stroke="#000" />;
}

function Plot() {
  return (
    <svg width="561" height="880" viewBox="1357 132 561 880" className="block bg-white" fill="none" fontFamily="Liberation Serif, Times New Roman, serif">
      <g fill="#000" fontSize="14.500">
        <text x="1346" y="153" fontSize="23.500" textLength="595" lengthAdjust="spacing">m1: (ibis_sim_0 IO2 1) ibis_sim_0 IO2 1 Pulse Typ Reflection</text>
        <text x="1637" y="178" textAnchor="middle" textLength="196">case0 - Mon Jun 19 16:16:57 2023</text>
        {[4, 3, 2, 1, 0, -1].map((v) => (
          <text key={v} x="1417" y={190 + (4 - v) * 142} textAnchor="end">{v}</text>
        ))}
        <text x="1423.500" y="914" textAnchor="middle">0</text>
        <text x="1658" y="914" textAnchor="middle">10</text>
        <text x="1892" y="914" textAnchor="middle">20</text>
        <text x="1657" y="942" textAnchor="middle" textLength="56">Time [ns]</text>
        <text transform="translate(1371 542) rotate(-90)" textAnchor="middle" textLength="66">Voltage [V]</text>
      </g>
      <g shapeRendering="crispEdges">
        <path d="M1423.500 185.500h469v710h-469z" stroke="#000" />
        <Ticks />
        <path d="M1424 469.500h468M1424 639.500h468" stroke="#800080" strokeDasharray="3 3" />
        <path d="M1424 519.500h468" stroke="#c0c0c0" strokeDasharray="3 3" />
      </g>
      <path d={grayFall} stroke="#c0c0c0" strokeWidth="2.600" />
      <path d={grayRise} stroke="#c0c0c0" strokeWidth="2.600" />
      <path d={purpleFall} stroke="#800080" strokeWidth="2.500" />
      <path d={purpleRise} stroke="#800080" strokeWidth="2.300" />
      <path d="M1424 284.500h468M1424 753.500h468" stroke="#800080" shapeRendering="crispEdges" />
      <path d="M1424 285.500h105" stroke="#800080" shapeRendering="crispEdges" />
      <g fontSize="14.200" textAnchor="end">
        <text x="1841.500" y="492" fill="#800080">2.000 V</text>
        <text x="1841.500" y="542" fill="#c0c0c0">1.650 V</text>
        <text x="1841.500" y="663" fill="#800080">800.000 mV</text>
      </g>
      <path d="M1369.500 957.500h536v44h-536z" stroke="#000" />
      <path d="M1424 977.500h76" stroke="#c0c0c0" />
      <path d="M1674 977.500h76" stroke="#800080" />
      <g fontSize="14.500" fill="#000">
        <text x="1526" y="982" textLength="96">ibis_sim_0 IO2 1</text>
        <text x="1776" y="982" textLength="96">ibis_sim_0 IO3 1</text>
      </g>
      <g fill="#a8a8a8" fillOpacity="0.8" fontFamily="Noto Sans, Noto Sans CJK KR, sans-serif">
        <text x="1505" y="964.500" fontSize="19" textLength="177">Windows 정품 인증</text>
        <text x="1505" y="986" fontSize="14.500" textLength="335">[설정]으로 이동하여 Windows를 정품 인증합니다.</text>
      </g>
    </svg>
  );
}

function SigWave() {
  return (
    <div className="flex h-[1040px] w-[769px] shrink-0 flex-col border border-[#6e5f5f] bg-[#f0f0f0]">
      <div className="flex h-[30px] shrink-0 items-center bg-white pl-[7px] font-['Noto_Sans'] text-[12px]">
        <svg width="16" height="16" viewBox="0 0 16 16" fill="none">
          <path d="M1 13l1-2 1-8 3-2 2 3 3-3 2 4 1 8h1" stroke="#00e000" strokeWidth="1.200" />
          <path d="M4 9.500h8" stroke="#f00" strokeWidth="1.600" />
          <path d="M2 9.500L6 6v7zM14.500 9.500L10.500 6v7z" fill="#f00" />
        </svg>
        <span className="ml-[6px] tracking-[-0.1px]">Untitled - SigWave</span>
        <span className="mr-[2px] ml-auto"><WinButtons color="#000" /></span>
      </div>
      <div className="flex h-[24px] shrink-0 items-center pr-[14px] pl-[3px]">
        <div className="mt-[3px] flex flex-col gap-[2px]">
          {[0, 1, 2, 3].map((i) => <i key={i} className="h-[3px] w-[3px] bg-[#0078d7]" />)}
        </div>
        <Menu items={["File", "Edit", "Zoom", "Graph", "Tools", "View", "Help"]} className="mt-[3px] ml-[4px] flex gap-[10px] font-['Noto_Sans'] text-[12px] tracking-[-0.3px]" />
        <span className="mt-[-3px] ml-auto"><Cadence /></span>
      </div>
      <div className="h-[4px] shrink-0 bg-[#d00000]" />
      <div className="flex h-[34px] shrink-0 gap-[2px] overflow-hidden pb-px">
        {row1.map((b, i) => <Bar key={i} {...b} />)}
      </div>
      <div className="mt-px flex h-[34px] shrink-0 gap-[2px] overflow-hidden">
        {row2.map((b, i) => <Bar key={i} {...b} />)}
        <div className="flex w-[16px] items-center bg-gradient-to-b from-[#e9e9e9] to-[#b8b8b8] pl-[2px]">
          <GripV />
          <span className="ml-[3px] flex h-[21px] flex-1 items-center border border-r-0 border-[#777] bg-white pl-px"><i className="h-[16px] w-full bg-[#0078d7]" /></span>
        </div>
      </div>
      <div className="mt-[2px] flex h-[889px] shrink-0">
        <div className="mr-[3px] flex h-[609px] w-[33px] shrink-0 flex-col items-center rounded-b-[4px] bg-gradient-to-r from-[#e6e6e6] to-[#b9b9b9] pt-[2px] pr-px">
          <GripH n={6} />
          <div className="mt-[4px] flex flex-col">
            {Array.from({ length: 22 }, (_, i) => (
              <div key={i} className={i === 0 ? "flex h-[27px] w-[27px] items-center justify-center bg-[#f4f4f4]" : "flex h-[27px] w-[27px] items-center justify-center"}>
                <svg width="17" height="17" viewBox="0 0 17 17" fill="#a6a6a6">
                  <path d="M0 0h5v5H0zM6 0h5v5H6zM12 0h5v5h-5zM0 6h5v5H0zM12 6h5v5h-5zM0 12h5v5H0zM6 12h5v5H6zM12 12h5v5h-5z" />
                  {i === 21 && <path d="M6 4h10v3H10v2h4v3h-4v4H6z" stroke="#ddd" />}
                </svg>
              </div>
            ))}
          </div>
        </div>
        <Tree />
        <div className="ml-[5px] flex flex-1 flex-col overflow-hidden">
          <div className="h-[883px] w-[563px] overflow-hidden border-t-2 border-l-2 border-[#7a7a7a]"><Plot /></div>
          <div className="mt-[4px] h-[2px] shrink-0 bg-[#7a7a7a]" />
        </div>
      </div>
      <div className="flex flex-1 items-center pt-[3px] font-['Noto_Sans'] text-[12px] leading-[16px] tracking-[-0.3px]">
        <span className="w-[525px] pl-[36px]">Ready</span>
        <span className="w-[97px] border-r border-[#d0d0d0]">X:</span>
        <span className="w-[101px] border-r border-[#d0d0d0] pl-[4px]">Y:</span>
        <Corner />
      </div>
    </div>
  );
}

/* ---------- taskbar ---------- */

const chrome = (
  <>
    <circle cx="12" cy="12" r="11" fill="#fbc116" />
    <path d="M12 12L2.500 6.500A11 11 0 0121.500 6.500H12z" fill="#e33b2e" />
    <path d="M12 12L2.500 6.500A11 11 0 0011 23l5-8.500z" fill="#2ba24c" />
    <circle cx="12" cy="12" r="5.300" fill="#fff" />
    <circle cx="12" cy="12" r="4.200" fill="#4286f5" />
  </>
);
const apps: { el: React.ReactNode; run?: boolean; active?: boolean }[] = [
  { el: <><circle cx="12" cy="12" r="11.500" fill="#1277d3" /><path d="M1 10C3-2 22-2 23.500 11c.2 4-4 6-8 5 2-2 1-7-4-7S2 11 1 10z" fill="#45cfae" /><path d="M1 11c2-4 8-5 11-2-4 1-5 8 1 11 3 1.500 6 1 8 0C14 27 0 23 1 11z" fill="#1b62bb" /></> },
  { el: <><path d="M1 3h9l2 3h11v16H1z" fill="#f0b429" /><path d="M1 8h22v14H1z" fill="#fcdb76" /><path d="M4 22v-8h16v8h-4v-4H8v4z" fill="#3a96e0" /></>, run: true },
  { el: <><path d="M7 6V2h10v4" stroke="#2aa6e8" strokeWidth="2" /><path d="M1 5h22v16a2 2 0 01-2 2H3a2 2 0 01-2-2z" fill="#f5f5f5" /><path d="M7 9h4v4H7z" fill="#f25022" /><path d="M12.500 9h4v4h-4z" fill="#7fba00" /><path d="M7 14.500h4v4H7z" fill="#00a4ef" /><path d="M12.500 14.500h4v4h-4z" fill="#ffb900" /></> },
  { el: <><path d="M0 9l12-8 12 8v14H0z" fill="#0f6cbd" /><path d="M1 9h22L12 18z" fill="#fff" /><path d="M0 9l12 9 12-9v14H0z" fill="#33a7ee" /></> },
  { el: <>{chrome}<circle cx="18" cy="18" r="6" fill="#55606e" /><circle cx="18" cy="16" r="2" fill="#eee" /><path d="M14.500 21c0-4 7-4 7 0z" fill="#eee" /></>, run: true },
  { el: <><circle cx="12" cy="12" r="10" fill="#3aa3ec" /><path d="M4 8a9 9 0 0116 0z" fill="#cfe9fb" /><path d="M6 9c3-3 9-3 12 0v4H6z" fill="#16324c" /><path d="M7 13h10l-2 4H9z" fill="#fff" /><path d="M9 15h6l-1 3h-4z" fill="#16324c" /></>, run: true },
  { el: <>{chrome}<circle cx="18.500" cy="18" r="6.500" fill="#c5380f" /><circle cx="18.500" cy="18" r="1" fill="#eee" /></>, run: true },
  { el: <><path d="M12 0l5.500 5.500L12 11 6.500 5.500z" fill="#f1666a" /><path d="M6 6.500l5.500 5.500L6 17.500.5 12z" fill="#76a9fa" /><path d="M18 6.500l5.500 5.500-5.500 5.500-5.500-5.500z" fill="#7cc55a" /><path d="M12 13l5.500 5.500L12 24l-5.500-5.500z" fill="#fde27a" /><path d="M9 5l3 4v8M12 10l5 3" stroke="#222" strokeWidth="1.500" /></>, run: true },
  { el: <><path d="M0 1h24v22H0z" fill="#c9c9c9" /><path d="M4 4h10v10H4z" fill="#00e5ff" stroke="#123" strokeWidth="1.500" strokeDasharray="2 1" /><path d="M18 3v6h4M20 1v7" stroke="#e00000" strokeWidth="1.300" /><path d="M18 22v-9h4" stroke="#00f" strokeWidth="1.300" /><path d="M9 12l8 3-3 1 3 5-2 1-3-5-2 2z" fill="#000" /><path d="M1 18h6v4H1z" fill="#fff" /></>, run: true },
  { el: <><path d="M6 21l2-5 1-10 2-1 1 3 2-3 3 1 1-1 2 4 1 9 2 3" stroke="#111" strokeWidth="1.600" /><path d="M3 7v14M6 12h13" stroke="#1f2fd8" strokeWidth="1.800" /><path d="M0 10l3-5 3 5zM0 18l3 5 3-5zM10 9v6l-4-3zM16 9v6l4-3z" fill="#1f2fd8" /></>, run: true, active: true },
  { el: <><path d="M0 0h24v19l-4 5H4l-4-5z" fill="#008000" /><path d="M5 22.500h14" stroke="#ff0" strokeWidth="2" strokeDasharray="2 1" /><text x="2" y="8" fontSize="8" fill="#fff" fontFamily="Liberation Sans, sans-serif">Sig</text><text x="0.500" y="17.500" fontSize="7.500" textLength="23" fill="#fff" fontFamily="Liberation Sans, sans-serif">Xplorer</text></>, run: true },
];

function Village() {
  return (
    <svg width="75" height="38" viewBox="2 2 76 38" preserveAspectRatio="none">
      <path d="M5 38V17l8-12 6 9h8l6 8v16z" fill="#8a4a26" />
      <path d="M8 18h25M7 24h27M7 30h27M12 12v24M18 14v22M24 15v21M30 20v16" stroke="#efcf9c" strokeWidth="1.600" strokeDasharray="3 1.500" />
      <path d="M13 2l7 11-3 1-4-6-5 9H4z" fill="#5b2c17" />
      <path d="M19 13l2-5h10l3 9H20z" fill="#7a3c1e" />
      <path d="M46 37V24l12-6 8-11 12-1v31z" fill="#d9c49a" />
      <path d="M56 18l10-12h12v7z" fill="#a86a30" />
      <path d="M60 19h18M60 25h18M60 30h18" stroke="#6d4322" strokeWidth="1.600" />
      <path d="M64 15v18M72 14v18" stroke="#f2e6c8" strokeWidth="2" />
      <path d="M34 26h14v5H34z" fill="#c9a877" />
      <path d="M34 24h14" stroke="#8e4a2b" strokeWidth="2" />
      <circle cx="57" cy="20" r="6" fill="#6e9a2c" /><circle cx="52" cy="27" r="6" fill="#557f22" /><circle cx="62" cy="27" r="6" fill="#7fae35" />
      <path d="M0 40c4-7 20-8 38-7s16 4 12 7z" fill="#4bb9d6" />
      <path d="M0 40c4-7 18-7 26-7" stroke="#e6d5a8" strokeWidth="2" fill="none" />
      <path d="M45 40c2-9 30-9 33-4v4z" fill="#3f6d22" />
      {[48, 54, 60, 67, 74].map((x, i) => <circle key={x} cx={x} cy={i % 2 ? 34 : 38} r="2.800" fill="#e51d8f" />)}
    </svg>
  );
}

function Taskbar() {
  return (
    <div className="flex h-[40px] w-[1920px] shrink-0 bg-[#1c1c1c] font-['Noto_Sans','Noto_Sans_CJK_KR',sans-serif] text-white">
      <div className="flex w-[48px] items-center justify-center">
        <svg width="16" height="16" viewBox="0 0 16 16" fill="#fff"><path d="M0 2.200L6.700 1.300V7.600H0zM7.500 1.200L16 0V7.600H7.500zM0 8.400h6.700v6.300L0 13.800zM7.500 8.400H16V16l-8.500-1.200z" /></svg>
      </div>
      <div className="flex w-[288px] items-center border border-[#c8c8c8] bg-[#f3f3f3] pl-[11px]">
        <svg width="17" height="17" viewBox="0 0 17 17" fill="none" stroke="#222" strokeWidth="1.300"><circle cx="10.500" cy="6" r="5" /><path d="M7 10l-6 6" /></svg>
        <span className="ml-[12px] text-[14px] text-[#333]">찾기</span>
        <i className="h-[14px] w-px bg-[#4a86c5]" />
        <span className="ml-auto"><Village /></span>
      </div>
      <div className="flex w-[50px] items-center justify-center">
        <svg width="16" height="16" viewBox="0 0 16 16" fill="none" stroke="#fff" strokeWidth="1.200"><path d="M1 1v2.500h9V1M1 15v-2.500h9V15M1 5.500h9v5H1zM13.500 1v3M13.500 9v6" /><path d="M12.500 5.500h2v2h-2z" fill="#fff" stroke="none" /></svg>
      </div>
      {apps.map((a, i) => (
        <div key={i} className={a.active ? "flex w-[49px] flex-col items-center bg-[#4a4a4a]" : "flex w-[49px] flex-col items-center"}>
          <div className="flex h-[38px] items-center pt-[2px]"><Ic>{a.el}</Ic></div>
          {a.run && <i className={a.active ? "h-[2px] w-full bg-[#76b9ed]" : "h-[2px] w-[40px] bg-[#76b9ed]"} />}
        </div>
      ))}
      <div className="ml-auto flex items-center">
        <svg width="26" height="24" viewBox="0 0 26 24">
          <circle cx="17" cy="8" r="6.500" fill="#f59a1b" />
          <path d="M6 22a5.500 5.500 0 01-1-10.500A7 7 0 0118 10a6 6 0 012 12z" fill="#b9d1f5" />
          <path d="M6 22a5.500 5.500 0 01-1-8c6-3 14 0 19 4a5 5 0 01-4 4z" fill="#dce9fb" />
        </svg>
        <span className="ml-[7px] text-[14px] tracking-[-0.5px]">34°C</span>
        <span className="ml-[9px] text-[14px] tracking-[0.6px] whitespace-pre">대체로 흐림</span>
        <svg className="ml-[30px]" width="110" height="22" viewBox="0 0 110 22" fill="none" stroke="#fff" strokeWidth="1.200">
          <path d="M1 14l6-6 6 6" />
          <path d="M24 5l13-2v14H24z" /><path d="M28 12c0-4 4-5 6-2M34 7v3h-3" /><circle cx="36.500" cy="15.500" r="3.700" fill="#ff9800" stroke="none" />
          <path d="M50 5h13v9H50M56 14v3M52 17.500h8M47 4h5v4h-5zM49.500 8v9" />
          <path d="M71 9h3l4-4v12l-4-4h-3zM80 8c1.500 2 1.500 4 0 6M82.500 6c2.500 3 2.500 7 0 10M85 4c3.500 4 3.500 10 0 14" />
          <text x="95" y="18" fontSize="19" fill="#fff" stroke="none" fontFamily="Noto Sans, sans-serif">A</text>
        </svg>
        <div className="ml-[3px] flex w-[80px] flex-col items-center text-[13px] leading-[18px] tracking-[-0.2px] whitespace-nowrap">
          <span className="text-[12.500px] tracking-[0.1px]">오후 4:17</span>
          <span>2023-06-19</span>
        </div>
        <svg className="mr-[14px] ml-[6px]" width="28" height="28" viewBox="0 0 28 28" fill="none">
          <path d="M2 3h16v13H10l-4 4v-4H2z" fill="#fff" />
          <path d="M5 6.500h10M5 9.500h10M5 12.500h7" stroke="#222" />
          <circle cx="17.500" cy="19.500" r="7.500" fill="#333" stroke="#999" />
          <text x="14" y="24" fontSize="12" fontWeight="700" fill="#fff" fontFamily="Noto Sans, sans-serif">5</text>
        </svg>
        <i className="h-[40px] w-px bg-[#666]" />
        <i className="w-[4px]" />
      </div>
    </div>
  );
}

export default function App() {
  return (
    <div className="flex h-[1080px] w-[1920px] flex-col overflow-hidden bg-[#f0f0f0] font-['Liberation_Sans',Arial,sans-serif] text-black">
      <div className="flex h-[1040px] shrink-0">
        <SigXplorer />
        <SigWave />
      </div>
      <Taskbar />
    </div>
  );
}
